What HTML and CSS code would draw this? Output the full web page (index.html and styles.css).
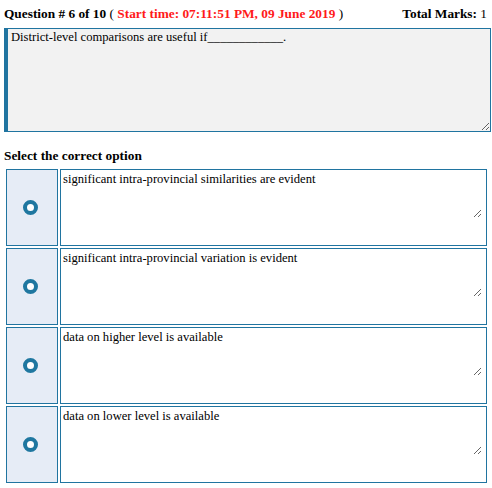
FILE: index.html
```html
<!DOCTYPE html>
<html>
<head>
<meta charset="utf-8">
<link rel="stylesheet" href="styles.css">
</head>
<body>
<div class="page">
  <div class="header">
    <div class="qinfo"><b>Question # 6 of 10</b> ( <b class="time">Start time: 07:11:51 PM, 09 June 2019</b> )</div>
    <div class="marks"><b>Total Marks:</b> 1</div>
  </div>
  <textarea class="question" readonly>District-level comparisons are useful if____________.</textarea>
  <div class="select-title">Select the correct option</div>
  <div class="options">
    <div class="radio-cell"><span class="radio"></span></div>
    <div class="text-cell"><textarea class="option-text" readonly>significant intra-provincial similarities are evident</textarea></div>
    <div class="radio-cell"><span class="radio"></span></div>
    <div class="text-cell"><textarea class="option-text" readonly>significant intra-provincial variation is evident</textarea></div>
    <div class="radio-cell"><span class="radio"></span></div>
    <div class="text-cell"><textarea class="option-text" readonly>data on higher level is available</textarea></div>
    <div class="radio-cell"><span class="radio"></span></div>
    <div class="text-cell"><textarea class="option-text" readonly>data on lower level is available</textarea></div>
  </div>
</div>
</body>
</html>
```
FILE: styles.css
```css
html, body {
  margin: 0;
  padding: 0;
  background: #ffffff;
}
body {
  font-family: "Liberation Serif", "Times New Roman", serif;
  font-size: 13.33px;
  color: #000;
}
.page {
  padding: 5px 1px 0 4px;
}
.header {
  display: flex;
  justify-content: space-between;
  font-size: 13.33px;
  line-height: 17px;
  height: 17px;
  padding-right: 4px;
}
.time {
  color: #ff1a1a;
}
.question {
  display: block;
  box-sizing: border-box;
  width: 487px;
  height: 104px;
  margin-top: 6px;
  padding: 1px 3px;
  border: 1px solid #2074a0;
  border-left: 4px solid #2074a0;
  background: #f2f2f2;
  font-family: "Liberation Serif", "Times New Roman", serif;
  font-size: 12.6px;
  line-height: 15px;
  color: #000;
  outline: none;
}
.select-title {
  font-weight: bold;
  font-size: 13.33px;
  line-height: 16px;
  margin-top: 16px;
}
.options {
  display: grid;
  grid-template-columns: 52px 427px;
  grid-auto-rows: 77px;
  column-gap: 2px;
  row-gap: 2px;
  margin-top: 5px;
  margin-left: 2px;
}
.radio-cell {
  box-sizing: border-box;
  border: 1px solid #2074a0;
  background: #e6ecf6;
  display: flex;
  align-items: center;
  justify-content: center;
}
.radio {
  box-sizing: border-box;
  width: 15px;
  height: 15px;
  border: 4px solid #1f77a0;
  border-radius: 50%;
  background: #fff;
  margin-left: -3px;
}
.text-cell {
  box-sizing: border-box;
  border: 1px solid #2074a0;
  background: #fff;
  padding: 1px 0 0 0;
}
.option-text {
  display: block;
  box-sizing: border-box;
  width: 421px;
  height: 47px;
  margin: 0;
  padding: 1px 2px;
  border: none;
  background: #fff;
  font-family: "Liberation Serif", "Times New Roman", serif;
  font-size: 12.6px;
  line-height: 15px;
  color: #000;
  outline: none;
}
```
